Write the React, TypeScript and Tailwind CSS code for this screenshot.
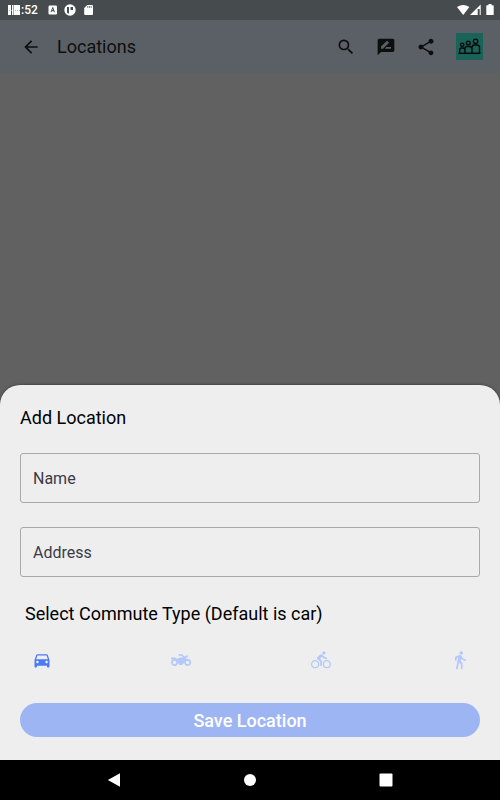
import { useState } from 'react';
import { clsx } from 'clsx';
import {
  MdArrowBack,
  MdDirectionsBike,
  MdDirectionsCar,
  MdDirectionsWalk,
  MdRateReview,
  MdSearch,
  MdShare,
} from 'react-icons/md';

function MotorcycleIcon({ size }: { size: number }) {
  return (
    <svg width={size} height={size} viewBox="0 0 24 24" aria-hidden="true">
      <g fill="none" stroke="currentColor" strokeWidth="2">
        <circle cx="4.200" cy="15" r="3.100" />
        <circle cx="20" cy="15" r="3.100" />
      </g>
      <path
        fill="currentColor"
        d="M0 9h5l2 1.500L11 9h3.600l-2-2H9V5h4.400l2.900 2.900L20 6v3h-2.600l2 2c-1.900.3-3.400 2-3.400 4l-2.500 3H10l-1.800-3c0-2-1.700-4-4.200-4H0z"
      />
    </svg>
  );
}

const commuteTypes = [
  { id: 'car', label: 'Car', Icon: MdDirectionsCar },
  { id: 'motorcycle', label: 'Motorcycle', Icon: MotorcycleIcon },
  { id: 'bike', label: 'Bike', Icon: MdDirectionsBike },
  { id: 'walk', label: 'Walk', Icon: MdDirectionsWalk },
];

function StatusBar() {
  return (
    <div className="flex h-5 items-center bg-[#464b4e] pl-2 pr-[5px] text-white">
      <div className="flex items-center text-xs font-medium">
        {/* redrawn hour digits of the system clock */}
        <svg width="13" height="10" viewBox="0 0 13 10" aria-hidden="true">
          <path fill="currentColor" d="M0 0h3v10H0zM4 0h1v10H4zM5.500 0H12v10H5.500z" />
          <path stroke="#b4b7b8" strokeDasharray="1 1" d="M1 5.500h11" />
        </svg>
        <span>:52</span>
      </div>
      <svg className="ml-[10px]" width="10" height="10" viewBox="0 0 10 10" aria-hidden="true">
        <rect x=".5" y=".5" width="8.500" height="9" rx="1.200" fill="currentColor" />
        <path d="M3 7.200 4.750 2.500 6.500 7.200M3.500 5.700h2.500" fill="none" stroke="#464b4e" />
      </svg>
      <svg className="ml-[6px]" width="12" height="12" viewBox="0 0 12 12" aria-hidden="true">
        <circle cx="6" cy="6" r="5.700" fill="currentColor" />
        <path fill="#464b4e" d="M3 3h2v6.500H4L3 8.500zM6.500 3H9v3H6.500z" />
      </svg>
      <svg className="ml-2" width="10" height="12" viewBox="0 0 10 12" aria-hidden="true">
        <path fill="currentColor" d="M3.300 1H8a1 1 0 0 1 1 1v8a1 1 0 0 1-1 1H1.200a1 1 0 0 1-1-1V4z" />
        <path stroke="#464b4e" strokeWidth=".7" d="M3.800 2v2M5.500 2v2M7.200 2v2" />
      </svg>
      <svg className="ml-auto" width="38" height="12" viewBox="0 0 38 12" aria-hidden="true">
        <path fill="currentColor" d="M0 3Q6.200-1.200 12.400 3L6.200 11z" />
        <path fill="currentColor" d="M13 11 23.700.5V11h-1V5h-2v6z" />
        <path fill="currentColor" d="M31.500 0h3v1.200H36a.7.7 0 0 1 .7.700v8.500a.7.700 0 0 1-.7.700h-6a.7.700 0 0 1-.7-.7V1.900a.7.700 0 0 1 .7-.7h1.500z" />
      </svg>
    </div>
  );
}

function GroupLogo() {
  return (
    <svg width="27" height="27" viewBox="0 0 27 27" aria-hidden="true">
      <rect width="27" height="27" fill="#1a6359" />
      <g fill="none" stroke="#050a0a" strokeWidth="1.400">
        <circle cx="6.200" cy="11.800" r="1.700" />
        <circle cx="12.300" cy="10" r="1.900" />
        <circle cx="19.600" cy="8.300" r="2.200" />
        <path d="M3.700 20v-3q0-2 2-2h1q2 0 2 2M9 20v-4.500q0-2 2-2h2.500q2 0 2 2M16 20v-5.500q0-2.500 2.500-2.500h2.500q2.500 0 2.500 2.500V20" />
        <path d="M2.500 20.300h22" strokeWidth="1.500" />
      </g>
    </svg>
  );
}

function TopBar() {
  return (
    <header className="flex h-[53px] items-center bg-[#5a6065] pl-[21px] pr-[17px] text-[#0d0e0e]">
      <button type="button" aria-label="Back">
        <MdArrowBack size={20} />
      </button>
      <h1 className="ml-4 text-lg text-[#0d0e0e]">Locations</h1>
      <div className="ml-auto flex items-center gap-5">
        <button type="button" aria-label="Search">
          <MdSearch size={20} />
        </button>
        <button type="button" aria-label="Feedback">
          <MdRateReview size={20} />
        </button>
        <button type="button" aria-label="Share">
          <MdShare size={20} />
        </button>
        <button type="button" aria-label="Groups">
          <GroupLogo />
        </button>
      </div>
    </header>
  );
}

function NavBar() {
  return (
    <nav className="flex h-10 items-center justify-center gap-[122px] bg-black text-white">
      <button type="button" aria-label="Back">
        <svg width="14" height="14" viewBox="0 0 14 14">
          <path fill="currentColor" d="M13 .3v13.400L.8 7z" />
        </svg>
      </button>
      <button type="button" aria-label="Home">
        <svg width="14" height="14" viewBox="0 0 14 14">
          <circle cx="7" cy="7" r="6" fill="currentColor" />
        </svg>
      </button>
      <button type="button" aria-label="Recent apps">
        <svg width="14" height="14" viewBox="0 0 14 14">
          <rect x=".5" y=".5" width="13" height="13" rx="1" fill="currentColor" />
        </svg>
      </button>
    </nav>
  );
}

const fieldClass =
  'h-[50px] w-full rounded-[3px] border border-[#a9a9a9] px-3 text-base text-black outline-none placeholder:text-[#3b3b46] focus:border-[#4b7bf5]';

function AddLocationSheet() {
  const [name, setName] = useState('');
  const [address, setAddress] = useState('');
  const [commute, setCommute] = useState('car');

  return (
    <form
      onSubmit={(e) => e.preventDefault()}
      className="rounded-t-[20px] bg-[#eeeeee] px-5 pb-[23px] pt-[21px] text-black shadow-[0_0_3px_rgba(0,0,0,0.5)]"
    >
      <h2 className="text-lg leading-6">Add Location</h2>
      <div className="mt-[23px] flex flex-col gap-6">
        <input
          aria-label="Name"
          placeholder="Name"
          value={name}
          onChange={(e) => setName(e.target.value)}
          className={fieldClass}
        />
        <input
          aria-label="Address"
          placeholder="Address"
          value={address}
          onChange={(e) => setAddress(e.target.value)}
          className={fieldClass}
        />
      </div>
      <fieldset className="mt-[25px]">
        <legend className="px-[5px] text-lg leading-6">Select Commute Type (Default is car)</legend>
        <div className="flex justify-between pl-3 pr-[10px] pt-6">
          {commuteTypes.map(({ id, label, Icon }) => (
            <label key={id} className={clsx('relative', commute === id ? 'text-[#4b7bf5]' : 'text-[#b3c8fb]')}>
              <input
                type="radio"
                name="commute"
                aria-label={label}
                checked={commute === id}
                onChange={() => setCommute(id)}
                className="sr-only"
              />
              <Icon size={20} />
            </label>
          ))}
        </div>
      </fieldset>
      <button
        type="submit"
        className="mt-[33px] h-[34px] w-full rounded-full bg-[#9eb5f4] pt-0.5 text-lg font-medium leading-6 text-white"
      >
        Save Location
      </button>
    </form>
  );
}

export default function App() {
  return (
    <div className="flex min-h-screen flex-col bg-[#616161] font-['Roboto',sans-serif]">
      <StatusBar />
      <TopBar />
      <main className="flex flex-1 flex-col justify-end">
        <AddLocationSheet />
      </main>
      <NavBar />
    </div>
  );
}
